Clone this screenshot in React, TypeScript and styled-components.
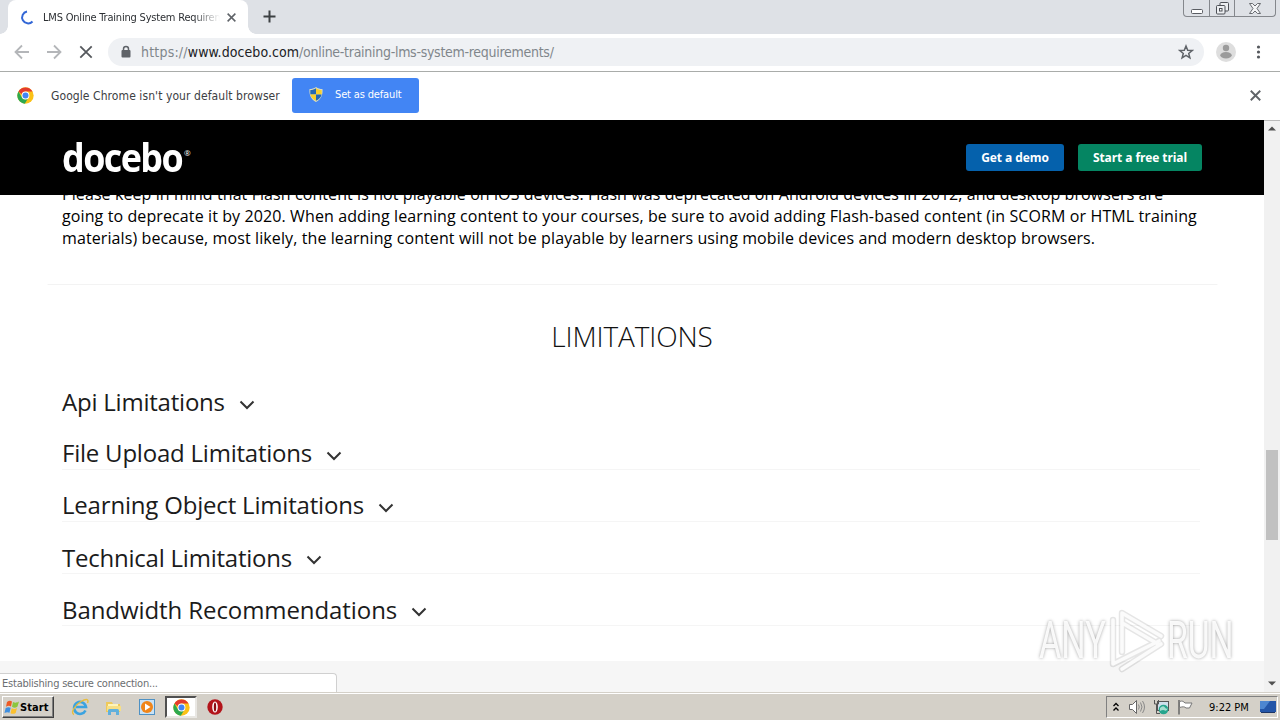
import React from 'react';
import styled, { createGlobalStyle } from 'styled-components';

const UI_FONT = "'DejaVu Sans Condensed', 'DejaVu Sans', 'Noto Sans', sans-serif";
const PAGE_FONT = "'Open Sans', 'Noto Sans', sans-serif";

const GlobalStyle = createGlobalStyle`
  * {
    box-sizing: border-box;
  }
  body {
    margin: 0;
    overflow: hidden;
    background: #fff;
  }
  svg {
    display: block;
    flex: none;
  }
`;

const Screen = styled.div`
  position: relative;
  display: flex;
  flex-direction: column;
  width: 1280px;
  height: 720px;
  overflow: hidden;
  font-family: ${UI_FONT};
`;

const Label = styled.span<{ size: number; spacing?: number; color?: string; weight?: number }>`
  white-space: nowrap;
  font-size: ${(props) => props.size}px;
  letter-spacing: ${(props) => props.spacing ?? 0}px;
  font-weight: ${(props) => props.weight ?? 400};
  color: ${(props) => props.color ?? 'inherit'};
`;

/* ---------- browser chrome ---------- */

const TabStrip = styled.div`
  display: flex;
  align-items: flex-start;
  height: 34px;
  background: #dee1e6;
`;

const Tab = styled.div`
  position: relative;
  display: flex;
  align-items: center;
  width: 240px;
  height: 34px;
  margin-left: 8px;
  padding: 0 9px 0 12px;
  background: #fff;
  border-radius: 8px 8px 0 0;
  color: #3c4043;

  &::before,
  &::after {
    content: '';
    position: absolute;
    bottom: 0;
    width: 8px;
    height: 8px;
  }
  &::before {
    left: -8px;
    background: radial-gradient(circle at 0 0, transparent 7.5px, #fff 8px);
  }
  &::after {
    right: -8px;
    background: radial-gradient(circle at 100% 0, transparent 7.5px, #fff 8px);
  }
`;

const TabTitle = styled.div`
  flex: none;
  width: 177px;
  margin: 0 7px 0 8px;
  line-height: 18px;
  color: #2c2f33;
  mask-image: linear-gradient(90deg, #000 150px, transparent 177px);
`;

const NewTab = styled.div`
  padding: 10px 0 0 15px;
`;

const WindowButtons = styled.div`
  display: flex;
  width: 93px;
  height: 17px;
  margin-left: auto;
  margin-right: 4px;
  border: 1px solid #84878c;
  border-top: 0;
  border-radius: 0 0 4px 4px;
`;

const WindowButton = styled.div<{ w: number }>`
  display: flex;
  align-items: center;
  justify-content: center;
  width: ${(props) => props.w}px;

  & + & {
    border-left: 1px solid #84878c;
  }
`;

const Toolbar = styled.div`
  display: flex;
  align-items: center;
  height: 38px;
  padding: 0 14px 1px;
  background: #fff;
  border-bottom: 1px solid #a9acaa;
`;

const NavButtons = styled.div`
  display: flex;
  gap: 16px;
`;

const Omnibox = styled.div`
  display: flex;
  align-items: center;
  width: 1096px;
  height: 28px;
  margin-left: 14px;
  padding: 0 10px 0 12px;
  background: #eff1f4;
  border-radius: 14px;
  color: #80868b;
`;

const Url = styled.div`
  flex: 1;
  margin-left: 9px;
  white-space: nowrap;
  line-height: 20px;
`;

const ToolbarEnd = styled.div`
  display: flex;
  align-items: center;
  gap: 14px;
  margin-left: 12px;
`;

const InfoBar = styled.div`
  display: flex;
  align-items: center;
  height: 48px;
  padding: 0 19px 1px 17px;
  background: #fff;
  color: #3c4043;
`;

const InfoText = styled.div`
  flex: none;
  width: 258px;
  padding: 0 0 3px 17px;
`;

const DefaultButton = styled.div`
  display: flex;
  align-items: center;
  gap: 12px;
  width: 127px;
  height: 35px;
  margin-bottom: 1px;
  padding: 0 0 1px 17px;
  background: #4285f4;
  border-radius: 3px;
  color: #fff;
`;

const PushRight = styled.div`
  margin-left: auto;
`;

/* ---------- page ---------- */

const Viewport = styled.div`
  position: relative;
  display: flex;
  height: 572px;
`;

const Page = styled.div`
  display: flex;
  flex-direction: column;
  width: 1264px;
  overflow: hidden;
  background: #fff;
  font-family: ${PAGE_FONT};
`;

const Header = styled.header`
  position: relative;
  display: flex;
  flex: none;
  align-items: center;
  height: 75px;
  padding: 0 62px;
  background: #000;
  color: #fff;
`;

const Logo = styled.div`
  display: flex;
  align-items: flex-start;
  flex: 1;
  height: 48px;
  line-height: 46px;
`;

const Wordmark = styled.div`
  width: 122px;
  font-size: 39px;
  font-weight: 700;
  letter-spacing: -1.7px;
  transform: scaleX(0.92);
  transform-origin: 0 50%;
`;

const Registered = styled.span`
  margin: 11px 0 0;
  font-size: 8px;
  line-height: 16px;
`;

const HeaderButton = styled.div<{ w: number; bg: string }>`
  display: flex;
  align-items: center;
  justify-content: center;
  width: ${(props) => props.w}px;
  height: 27px;
  margin-left: 14px;
  background: ${(props) => props.bg};
  border-radius: 3px;
`;

const Copy = styled.div`
  flex: none;
  height: 90px;
  padding-left: 62px;
  border-bottom: 1px solid #f3f3f3;
  border-image: linear-gradient(90deg, transparent 48px, #f3f3f3 49px, #f3f3f3 1216px, transparent 1217px) 1;
`;

const CopyLine = styled.div`
  height: 22px;
  line-height: 22px;
  color: #000;

  &:first-child {
    margin-top: -12px;
  }
`;

const Heading = styled.h2`
  margin: 30px 0 0;
  height: 43px;
  line-height: 42px;
  text-align: center;
  font-weight: 300;
  color: #111;
`;

const Accordion = styled.div`
  flex: none;
  width: 1138px;
  height: 303px;
  margin-left: 62px;
  padding-top: 27px;
`;

const AccordionRow = styled.div<{ h: number; line?: boolean }>`
  display: flex;
  align-items: flex-end;
  height: ${(props) => props.h}px;
  border-bottom: 1px solid ${(props) => (props.line ? '#f5f5f5' : 'transparent')};
  color: #1b1b1b;
`;

const RowTitle = styled.div<{ lead: number }>`
  height: 34px;
  line-height: ${(props) => props.lead}px;
`;

const Chevron = styled.svg`
  margin: 0 0 7px 14px;
`;

const Footer = styled.div`
  flex: 1;
  background: #f6f6f6;
`;

const StatusBubble = styled.div`
  position: absolute;
  left: 0;
  bottom: 0;
  width: 337px;
  height: 19px;
  padding-left: 2px;
  background: #fff;
  border: 1px solid #d0d0d0;
  border-width: 1px 1px 0 0;
  border-radius: 0 4px 0 0;
  line-height: 16px;
  color: #6b6e71;
`;

const Scrollbar = styled.div`
  display: flex;
  flex-direction: column;
  align-items: center;
  justify-content: space-between;
  width: 16px;
  padding: 5px 0 6px;
  background: #f1f1f1;
  border-top: 1px solid #bbb;
`;

const Thumb = styled.div`
  width: 12px;
  height: 90px;
  margin-top: 178px;
  background: #c1c1c1;
`;

const Watermark = styled.div`
  position: absolute;
  left: 1039px;
  top: 606px;
  display: flex;
  align-items: center;
  height: 70px;
`;

const WatermarkText = styled.span<{ w: number; scale: number }>`
  width: ${(props) => props.w}px;
  font-family: Roboto, sans-serif;
  font-size: 51px;
  line-height: 70px;
  color: rgba(255, 255, 255, 0.9);
  text-shadow: 0 0 4px rgba(0, 0, 0, 0.38);
  white-space: nowrap;
  transform: scaleX(${(props) => props.scale});
  transform-origin: 0 50%;
`;

/* ---------- taskbar ---------- */

const Taskbar = styled.div`
  display: flex;
  align-items: center;
  height: 28px;
  padding: 1px 2px 0 2px;
  background: #d4d0c8;
  border-top: 1px solid #d4d0c8;
  box-shadow: inset 0 1px 0 #fff;
`;

const StartButton = styled.div`
  display: flex;
  align-items: center;
  width: 52px;
  height: 22px;
  padding-left: 1px;
  border: 1px solid;
  border-color: #fff #404040 #404040 #fff;
  box-shadow: inset -1px -1px 0 #808080;
  color: #000;
`;

const TaskIcon = styled.div<{ active?: boolean; w: number }>`
  display: flex;
  align-items: center;
  justify-content: center;
  width: ${(props) => props.w}px;
  height: 22px;
  background: ${(props) => (props.active ? '#fff' : 'none')};
  border: ${(props) => (props.active ? '2px solid' : '0 solid')};
  border-color: #505050 #e9e7e3 #e9e7e3 #505050;
`;

const TaskIcons = styled.div`
  display: flex;
  margin-left: 9px;
`;

const Tray = styled.div`
  display: flex;
  align-items: center;
  width: 172px;
  height: 22px;
  margin-left: auto;
  padding-left: 5px;
  border: 1px solid;
  border-color: #808080 #fff #fff #808080;
  color: #000;
`;

const TrayIcon = styled.svg`
  margin-left: 7px;
`;

const Clock = styled.div`
  width: 51px;
  margin-left: 15px;
  padding-bottom: 3px;
`;

const ChromeLogo = () => (
  <svg width="17" height="17" viewBox="0 0 48 48">
    <circle cx="24" cy="24" r="23" fill="#fbc116" />
    <path d="M4 12.5A23 23 0 0 1 44 13H24a11 11 0 0 0-10.5 7.500z" fill="#e33b2e" />
    <path d="M4 12.500A23 23 0 0 0 22 47l10-16.500a11 11 0 0 1-18-1z" fill="#2da94f" />
    <circle cx="24" cy="24" r="11" fill="#fff" />
    <circle cx="24" cy="24" r="8.500" fill="#4285f4" />
  </svg>
);

const Cross = ({ size, stroke, width }: { size: number; stroke: string; width: number }) => (
  <svg width={size} height={size} viewBox="0 0 10 10" fill="none" stroke={stroke} strokeWidth={width}>
    <path d="M.7.7l8.600 8.600M9.300.7L.7 9.300" />
  </svg>
);

const Shield = () => (
  <svg width="14" height="15" viewBox="0 0 14 15">
    <path d="M7 0c2 1.500 4 2 6.500 2C14 8 12 12.500 7 15 2 12.500 0 8 .5 2 3 2 5 1.500 7 0z" fill="#d9dcc0" />
    <path d="M7 1.200v6.300H1.400C1.200 6 1.300 4.500 1.400 3 3.500 3 5.500 2.300 7 1.200z" fill="#2468b4" />
    <path d="M7 1.200c1.500 1.100 3.500 1.800 5.600 1.800.1 1.500.2 3 0 4.500H7z" fill="#f8cf2c" />
    <path d="M1.400 7.500H7v6.300c-3.300-1.600-5-3.600-5.600-6.300z" fill="#f8cf2c" />
    <path d="M12.600 7.500H7v6.300c3.300-1.600 5-3.600 5.600-6.300z" fill="#2468b4" />
  </svg>
);

const NavIcon = ({ d, stroke }: { d: string; stroke: string }) => (
  <svg width="16" height="16" viewBox="0 0 16 16" fill="none" stroke={stroke} strokeWidth="1.800">
    <path d={d} />
  </svg>
);

const BrowserTop = () => (
  <>
    <TabStrip>
      <Tab>
        <svg width="15" height="15" viewBox="0 0 15 15" fill="none" stroke="#3367d6" strokeWidth="2">
          <path d="M7 1.500A6 6 0 1 0 12.500 11.500" />
        </svg>
        <TabTitle>
          <Label size={11} spacing={-0.2}>LMS Online Training System Requirem</Label>
        </TabTitle>
        <Cross size={9} stroke="#5f6368" width={1.700} />
      </Tab>
      <NewTab>
        <svg width="13" height="13" viewBox="0 0 13 13" stroke="#3c4043" strokeWidth="2">
          <path d="M6.500.5v12M.5 6.500h12" />
        </svg>
      </NewTab>
      <WindowButtons>
        <WindowButton w={25}>
          <svg width="12" height="13" viewBox="0 0 12 13" fill="#fff" stroke="#5a5d63">
            <rect x=".5" y="7.500" width="11" height="4" rx="1" />
          </svg>
        </WindowButton>
        <WindowButton w={25}>
          <svg width="13" height="14" viewBox="0 0 13 14" fill="#eceef1" stroke="#4d5056">
            <rect x="4" y="1.500" width="8.500" height="8.500" rx="1" />
            <rect x=".5" y="4.500" width="8.500" height="8.500" rx="1" />
            <rect x="3.500" y="7.500" width="2.500" height="2.500" fill="#fff" />
          </svg>
        </WindowButton>
        <WindowButton w={41}>
          <svg width="12" height="11" viewBox="0 0 12 11" fill="#f4f5f7" stroke="#5a5d63" strokeWidth=".9">
            <path d="M.5.5h3L6 3 8.500.5h3L8 5.500l3.500 5h-3L6 8l-2.500 2.500h-3l3.500-5z" />
          </svg>
        </WindowButton>
      </WindowButtons>
    </TabStrip>
    <Toolbar>
      <NavButtons>
        <NavIcon stroke="#b4b6b9" d="M15 8H2M8 1.500L1.500 8 8 14.500" />
        <NavIcon stroke="#b4b6b9" d="M1 8h13M8 1.500L14.500 8 8 14.500" />
        <NavIcon stroke="#55585d" d="M2.300 2.300l11.400 11.400M13.700 2.300L2.300 13.700" />
      </NavButtons>
      <Omnibox>
        <svg width="12" height="14" viewBox="0 0 12 14">
          <path d="M3.500 6V4a2.500 2.500 0 0 1 5 0v2" fill="none" stroke="#5f6368" strokeWidth="1.500" />
          <rect x="1.500" y="5" width="9" height="7.500" rx="1" fill="#5f6368" />
        </svg>
        <Url>
          <Label size={14} spacing={0.2}>https://</Label>
          <Label size={14} spacing={0.07} color="#202124">www.docebo.com</Label>
          <Label size={14} spacing={-0.28}>/online-training-lms-system-requirements/</Label>
        </Url>
        <svg width="16" height="16" viewBox="0 0 16 16" fill="none" stroke="#5f6368" strokeWidth="1.500">
          <path d="M8 2l1.700 4.200 4.500.3-3.500 2.900 1.200 4.400L8 11.400l-3.900 2.400 1.200-4.400L1.800 6.500l4.500-.3z" />
        </svg>
      </Omnibox>
      <ToolbarEnd>
        <svg width="20" height="20" viewBox="0 0 20 20">
          <circle cx="10" cy="10" r="10" fill="#dedede" />
          <circle cx="10" cy="6" r="3.200" fill="#9b9b9b" />
          <ellipse cx="10" cy="13.300" rx="5.700" ry="3.200" fill="#9b9b9b" />
        </svg>
        <svg width="16" height="16" viewBox="0 0 16 16" fill="#55585d">
          <circle cx="8.500" cy="3" r="1.600" />
          <circle cx="8.500" cy="8" r="1.600" />
          <circle cx="8.500" cy="13" r="1.600" />
        </svg>
      </ToolbarEnd>
    </Toolbar>
    <InfoBar>
      <ChromeLogo />
      <InfoText>
        <Label size={12} spacing={0.08}>Google Chrome isn't your default browser</Label>
      </InfoText>
      <DefaultButton>
        <Shield />
        <Label size={11} spacing={-0.15}>Set as default</Label>
      </DefaultButton>
      <PushRight>
        <Cross size={11} stroke="#5f6368" width={1.700} />
      </PushRight>
    </InfoBar>
  </>
);

const copy = [
  {
    spacing: 0.085,
    text: 'Please keep in mind that Flash content is not playable on iOS devices. Flash was deprecated on Android devices in 2012, and desktop browsers are',
  },
  {
    spacing: 0.107,
    text: 'going to deprecate it by 2020. When adding learning content to your courses, be sure to avoid adding Flash-based content (in SCORM or HTML training',
  },
  {
    spacing: 0.105,
    text: 'materials) because, most likely, the learning content will not be playable by learners using mobile devices and modern desktop browsers.',
  },
];

const sections = [
  { title: 'Api Limitations', h: 34, lead: 36, spacing: -0.22 },
  { title: 'File Upload Limitations', h: 51, lead: 36, spacing: -0.22, line: true },
  { title: 'Learning Object Limitations', h: 52, lead: 36, spacing: -0.19, line: true },
  { title: 'Technical Limitations', h: 52, lead: 38, spacing: -0.23, line: true },
  { title: 'Bandwidth Recommendations', h: 52, lead: 38, spacing: -0.08, line: true },
];

const PageBody = () => (
  <Page>
    <Header>
      <Logo>
        <Wordmark>docebo</Wordmark>
        <Registered>®</Registered>
      </Logo>
      <HeaderButton w={98} bg="#0561ac">
        <Label size={12} weight={700} spacing={-0.08}>Get a demo</Label>
      </HeaderButton>
      <HeaderButton w={124} bg="#058562">
        <Label size={12} weight={700} spacing={-0.1}>Start a free trial</Label>
      </HeaderButton>
    </Header>
    <Copy>
      {copy.map((line) => (
        <CopyLine key={line.text}>
          <Label size={16} spacing={line.spacing}>{line.text}</Label>
        </CopyLine>
      ))}
    </Copy>
    <Heading>
      <Label size={28} weight={300} spacing={-0.12}>LIMITATIONS</Label>
    </Heading>
    <Accordion>
      {sections.map((s) => (
        <AccordionRow key={s.title} h={s.h} line={s.line}>
          <RowTitle lead={s.lead}>
            <Label size={24} spacing={s.spacing}>{s.title}</Label>
          </RowTitle>
          <Chevron width="16" height="12" viewBox="0 0 16 12" fill="none" stroke="#333" strokeWidth="2">
            <path d="M1.500 2.500L8 9l6.500-6.500" />
          </Chevron>
        </AccordionRow>
      ))}
    </Accordion>
    <Footer />
  </Page>
);

const App: React.FC = () => (
  <Screen>
    <GlobalStyle />
    <BrowserTop />
    <Viewport>
      <PageBody />
      <Scrollbar>
        <svg width="8" height="5" viewBox="0 0 8 5">
          <path d="M0 4.500L4 .5l4 4z" fill="#505050" />
        </svg>
        <Thumb />
        <svg width="8" height="5" viewBox="0 0 8 5">
          <path d="M0 .5l4 4 4-4z" fill="#505050" />
        </svg>
      </Scrollbar>
      <StatusBubble>
        <Label size={11} spacing={-0.22}>Establishing secure connection...</Label>
      </StatusBubble>
    </Viewport>
    <Taskbar>
      <StartButton>
        <svg width="16" height="16" viewBox="0 0 16 16">
          <path d="M3 3c2-1.500 3.500-1.500 5-.5L7 7.500c-1.500-1-3-1-5 .2z" fill="#ee5a24" />
          <path d="M9 3c2 1 3.500 1 6-.5l-1.500 5C11.500 9 10 9 8 7.800z" fill="#8cc63e" />
          <path d="M1.700 9c2-1.200 3.500-1 5-.2l-1.200 5C4 13 2.500 13 .5 14z" fill="#3f8fe0" />
          <path d="M7.700 9.200c2 1 3.500 1 5.300-.2l-1.300 5c-2 1.200-3.500 1-5.200.2z" fill="#fbc02d" />
        </svg>
        <Label size={11} weight={700} spacing={0.1}>Start</Label>
      </StartButton>
      <TaskIcons>
        <TaskIcon w={34}>
          <svg width="18" height="18" viewBox="0 0 18 18" fill="none">
            <path d="M14.500 12.500A6 6 0 1 1 15 9H5" stroke="#3ba3e0" strokeWidth="2.600" />
            <path d="M3 16.500C-1 15 4 7 10 3.500s8-2 6.500 1.500" stroke="#e9bd3a" strokeWidth="1.400" />
          </svg>
        </TaskIcon>
        <TaskIcon w={33}>
          <svg width="17" height="17" viewBox="0 0 17 17">
            <path d="M1 3h6l1 2h7v8H1z" fill="#eec95b" />
            <path d="M3 5h10v3H3z" fill="#fff4b8" />
            <path d="M2 7h14v5H2z" fill="#f7df85" />
            <path d="M3 16v-4.500q0-1.500 1.500-1.500h8q1.500 0 1.500 1.500V16h-3v-3H6v3z" fill="#61b0dc" />
          </svg>
        </TaskIcon>
        <TaskIcon w={35}>
          <svg width="17" height="17" viewBox="0 0 17 17">
            <rect x=".5" y=".5" width="15" height="15" fill="#c9e2f5" stroke="#4e91c4" />
            <circle cx="8" cy="8" r="6" fill="#f08519" />
            <path d="M6 4.500l5.500 3.500L6 11.500z" fill="#fff" />
          </svg>
        </TaskIcon>
        <TaskIcon w={32} active>
          <ChromeLogo />
        </TaskIcon>
        <TaskIcon w={36}>
          <svg width="16" height="16" viewBox="0 0 16 16">
            <circle cx="8" cy="8" r="7.700" fill="#b3141b" />
            <ellipse cx="8" cy="8" rx="2.800" ry="5.500" fill="#fff" />
            <ellipse cx="8" cy="8" rx="1.200" ry="4.500" fill="#8c0c12" />
          </svg>
        </TaskIcon>
      </TaskIcons>
      <Tray>
        <svg width="9" height="12" viewBox="0 0 9 12" fill="none" stroke="#000" strokeWidth="1.300">
          <path d="M1.500 5L4 2.500 6.500 5M1.500 9.500L4 7l2.500 2.500" />
        </svg>
        <TrayIcon width="18" height="16" viewBox="0 0 18 16">
          <path d="M1.500 5.500h3l4-4v13l-4-4h-3z" fill="#fff" stroke="#666" />
          <path d="M10.500 5.500q1.500 2.500 0 5M12.500 3.500q3 4.500 0 9M14.500 2q4 6 0 12" fill="none" stroke="#888" />
        </TrayIcon>
        <TrayIcon width="17" height="16" viewBox="0 0 17 16">
          <rect x="4.500" y="2.500" width="11" height="9" fill="#cfe0ec" stroke="#555" />
          <path d="M1.500 1v4h4V1M3.500 5v9.500H7" fill="none" stroke="#555" />
          <circle cx="10.500" cy="10.500" r="4.800" fill="#26a58d" />
          <path d="M7 9q3-3 5-.5t3 0q-1 4-3 3T7 12z" fill="#a6ddd0" />
        </TrayIcon>
        <TrayIcon width="17" height="16" viewBox="0 0 17 16">
          <path d="M2 1v14.500" stroke="#666" strokeWidth="1.500" />
          <path d="M2.500 2.500c3-1 4 0 5.500 1.500h7l-2.500 5H9C7.500 7.500 6 7.500 2.500 8.500z" fill="#fff" stroke="#777" />
        </TrayIcon>
        <Clock>
          <Label size={11}>9:22 PM</Label>
        </Clock>
        <svg width="16" height="14" viewBox="0 0 16 14">
          <rect x="0" y="1" width="16" height="11" fill="#2456a8" />
          <path d="M0 1h10L4 9H0z" fill="#4d86d0" />
          <path d="M1 12h14v1H1z" fill="#1b3566" />
        </svg>
      </Tray>
    </Taskbar>
    <Watermark>
      <WatermarkText w={68} scale={0.67}>ANY</WatermarkText>
      <svg width="60" height="70" viewBox="0 0 60 70" fill="none" strokeLinejoin="round" strokeLinecap="round">
        <g stroke="rgba(0,0,0,0.1)" strokeWidth="6.500">
          <path d="M15 46V7l39 23M6 14v44l46-23M17 18l34 20M15 63l39-25" />
        </g>
        <g stroke="#fbfbfb" strokeWidth="3.600">
          <path d="M15 46V7l39 23M6 14v44l46-23M17 18l34 20M15 63l39-25" />
        </g>
      </svg>
      <WatermarkText w={70} scale={0.66}>RUN</WatermarkText>
    </Watermark>
  </Screen>
);

export default App;
